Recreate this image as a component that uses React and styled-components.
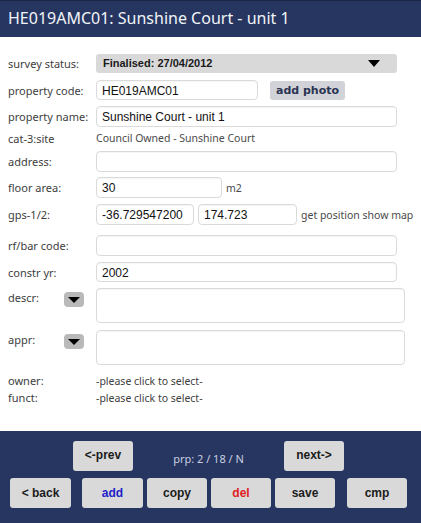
import React from 'react'
import styled, { createGlobalStyle } from 'styled-components'

const GlobalStyle = createGlobalStyle`
  html, body {
    margin: 0;
    padding: 0;
    background: #fff;
  }
  * {
    box-sizing: border-box;
  }
`

const Page = styled.div`
  width: 421px;
  height: 523px;
  display: flex;
  flex-direction: column;
  font-family: 'Noto Sans', 'DejaVu Sans', sans-serif;
`

const Header = styled.div`
  height: 37px;
  background: #263661;
  border-top: 1px solid #1b2647;
  color: #f2f4f8;
  font-size: 16px;
  padding: 6px 0 0 8px;
  white-space: nowrap;
`

const Form = styled.div`
  flex: 1;
  padding: 16px 0 0 8px;
`

const Row = styled.div`
  display: flex;
  align-items: ${(p) => (p.top ? 'flex-start' : 'center')};
  height: ${(p) => p.h || 20}px;
  margin-bottom: ${(p) => (p.mb === undefined ? 6 : p.mb)}px;
`

const Label = styled.div`
  width: 88px;
  flex: none;
  font-size: 11px;
  color: #3e3e3e;
  white-space: nowrap;
  display: flex;
  align-items: flex-start;
  justify-content: space-between;
  padding-top: ${(p) => p.pt || 0}px;
`

const Select = styled.div`
  width: 301px;
  height: 19px;
  background: #d9d9d9;
  border-radius: 3px;
  display: flex;
  align-items: center;
  justify-content: space-between;
  padding: 0 17px 0 7px;
  font-family: 'Liberation Sans', Arial, sans-serif;
  font-weight: bold;
  font-size: 11px;
  color: #1a1a1a;
`

const Arrow = styled.span`
  width: 0;
  height: 0;
  border-left: ${(p) => p.w || 6}px solid transparent;
  border-right: ${(p) => p.w || 6}px solid transparent;
  border-top: ${(p) => p.hgt || 7}px solid #000;
`

const Input = styled.div`
  width: ${(p) => p.w}px;
  height: ${(p) => p.h || 20}px;
  border: 1px solid #dadada;
  border-radius: 4px;
  box-shadow: inset 0 1px 1px rgba(0, 0, 0, 0.04);
  background: #fff;
  padding: 3px 0 0 5px;
  font-family: 'Liberation Sans', Arial, sans-serif;
  font-size: 12px;
  color: #111;
  white-space: nowrap;
  overflow: hidden;
  margin-right: ${(p) => p.mr || 0}px;
`

const GrayButton = styled.div`
  margin-left: 12px;
  height: 19px;
  padding: 0 6px;
  background: #d2d3d8;
  border-radius: 3px;
  display: flex;
  align-items: center;
  font-family: 'DejaVu Sans', Verdana, sans-serif;
  font-weight: bold;
  font-size: 11px;
  color: #2b3452;
`

const Plain = styled.span`
  font-size: 10.5px;
  color: ${(p) => p.color || '#4a4a4a'};
  margin-left: ${(p) => p.ml || 0}px;
  white-space: nowrap;
`

const DropBtn = styled.div`
  width: 20px;
  height: 15px;
  margin-right: 12px;
  background: #b9b9b9;
  border-radius: 4px;
  display: flex;
  align-items: center;
  justify-content: center;
  margin-top: 2px;
`

const Footer = styled.div`
  height: 92px;
  background: #263661;
  padding-top: 10px;
`

const NavRow = styled.div`
  display: flex;
  align-items: center;
  padding-left: 73px;
  margin-bottom: 7px;
`

const Counter = styled.div`
  width: 151px;
  text-align: center;
  font-size: 11px;
  color: #c9cfe0;
  padding-top: 5px;
`

const ActionRow = styled.div`
  display: flex;
  padding-left: 10px;
`

const Btn = styled.div`
  width: ${(p) => p.w || 60}px;
  height: 30px;
  background: #d9d9d9;
  border-radius: 3px;
  display: flex;
  align-items: center;
  justify-content: center;
  font-family: 'Liberation Sans', Arial, sans-serif;
  font-weight: bold;
  font-size: 12px;
  color: ${(p) => p.color || '#1c1c1c'};
  margin-right: ${(p) => p.mr || 0}px;
  padding-bottom: ${(p) => (p.raised ? 3 : 0)}px;
`

export default function App() {
  return (
    <Page>
      <GlobalStyle />
      <Header>HE019AMC01: Sunshine Court - unit 1</Header>
      <Form>
        <Row mb={7}>
          <Label>survey status:</Label>
          <Select>
            Finalised: 27/04/2012
            <Arrow />
          </Select>
        </Row>
        <Row>
          <Label>property code:</Label>
          <Input w={162}>HE019AMC01</Input>
          <GrayButton>add photo</GrayButton>
        </Row>
        <Row h={21} mb={3}>
          <Label>property name:</Label>
          <Input w={301} h={21}>Sunshine Court - unit 1</Input>
        </Row>
        <Row h={16} mb={5}>
          <Label>cat-3:site</Label>
          <Plain>Council Owned - Sunshine Court</Plain>
        </Row>
        <Row h={21} mb={5}>
          <Label>address:</Label>
          <Input w={301} h={21} />
        </Row>
        <Row h={21} mb={6}>
          <Label>floor area:</Label>
          <Input w={126} h={21}>30</Input>
          <Plain ml={4}>m2</Plain>
        </Row>
        <Row h={21} mb={10}>
          <Label>gps-1/2:</Label>
          <Input w={98} h={21} mr={4}>-36.729547200</Input>
          <Input w={99} h={21}>174.723</Input>
          <Plain ml={4}>get position show map</Plain>
        </Row>
        <Row h={21} mb={6}>
          <Label>rf/bar code:</Label>
          <Input w={301} h={21} />
        </Row>
        <Row h={20} mb={6}>
          <Label>constr yr:</Label>
          <Input w={301} h={20}>2002</Input>
        </Row>
        <Row top h={35} mb={7}>
          <Label pt={2}>
            descr:
            <DropBtn>
              <Arrow w={6} hgt={6} />
            </DropBtn>
          </Label>
          <Input w={309} h={35} />
        </Row>
        <Row top h={35} mb={8}>
          <Label pt={2}>
            appr:
            <DropBtn>
              <Arrow w={6} hgt={6} />
            </DropBtn>
          </Label>
          <Input w={309} h={35} />
        </Row>
        <Row h={15} mb={2}>
          <Label>owner:</Label>
          <Plain color="#3e3e3e">-please click to select-</Plain>
        </Row>
        <Row h={15} mb={0}>
          <Label>funct:</Label>
          <Plain color="#3e3e3e">-please click to select-</Plain>
        </Row>
      </Form>
      <Footer>
        <NavRow>
          <Btn raised>&lt;-prev</Btn>
          <Counter>prp: 2 / 18 / N</Counter>
          <Btn raised>next-&gt;</Btn>
        </NavRow>
        <ActionRow>
          <Btn w={61} mr={11}>&lt; back</Btn>
          <Btn w={61} mr={4} color="#2121c9">add</Btn>
          <Btn mr={4}>copy</Btn>
          <Btn mr={4} color="#e0201e">del</Btn>
          <Btn mr={12}>save</Btn>
          <Btn>cmp</Btn>
        </ActionRow>
      </Footer>
    </Page>
  )
}
